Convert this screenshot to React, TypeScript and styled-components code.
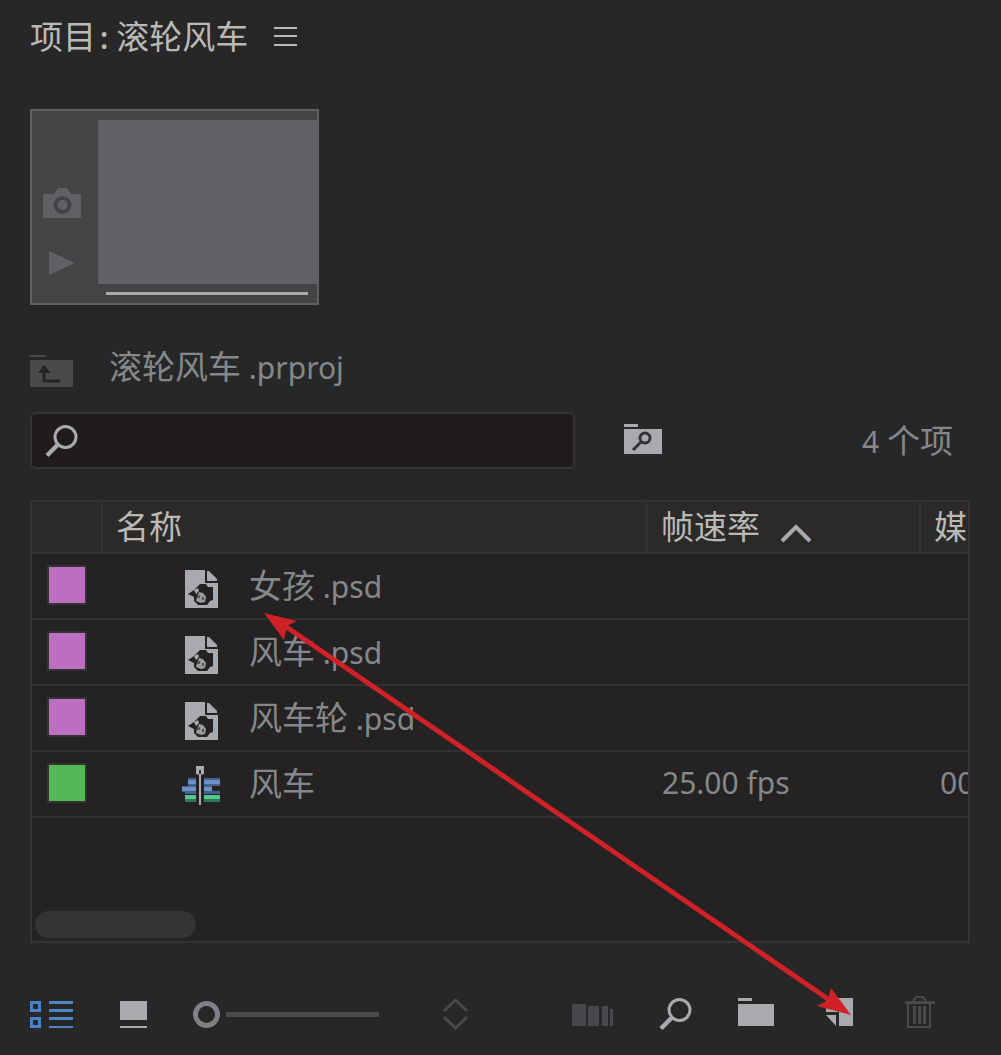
import React from "react";
import styled, { createGlobalStyle } from "styled-components";

const color = {
  page: "#282727",
  panel: "#242222",
  header: "#2b2a29",
  line: "#343233",
  bright: "#b9b9b8",
  text: "#84888a",
  icon: "#a9aaad",
  dim: "#4a4a4d",
  blue: "#5083c5",
};

const latin = `"Noto Sans", "Noto Sans CJK SC", sans-serif`;
const cjk = `"Noto Sans CJK SC", "Noto Sans", sans-serif`;

const GlobalStyle = createGlobalStyle`
  *, *::before, *::after { box-sizing: border-box; }
  body { margin: 0; background: ${color.page}; }
  svg { display: block; flex: none; }
`;

const Panel = styled.main`
  position: relative;
  display: flex;
  flex-direction: column;
  min-height: 100vh;
  padding: 12px 31px 21px 30px;
  overflow: hidden;
  background: ${color.page};
  color: ${color.text};
  font: 400 30px/48px ${latin};
`;

const Han = styled.span`
  font-family: ${cjk};
  font-size: 33px;
  font-weight: 400;
`;

const IconButton = styled.button`
  display: flex;
  flex: none;
  padding: 0;
  border: 0;
  background: none;
  cursor: pointer;
`;

const TitleBar = styled.header`
  display: flex;
  align-items: center;
  gap: 26px;
  height: 48px;
`;

const Title = styled.h1`
  margin: 0;
  color: ${color.bright};
  font: inherit;
  white-space: nowrap;
`;

const Colon = styled.span`
  margin: 0 8px 0 4px;
  font-weight: 600;
`;

const Preview = styled.section`
  display: flex;
  width: 289px;
  height: 196px;
  margin-top: 49px;
  border: 2px solid #5f6165;
  background: #444346;
`;

const PreviewTools = styled.div`
  display: flex;
  flex-direction: column;
  align-items: center;
  gap: 31px;
  width: 66px;
  padding: 76px 6px 0 0;
`;

const PreviewScreen = styled.div`
  flex: 1;
  padding-top: 9px;
`;

const Frame = styled.div`
  height: 164px;
  background: #5f6165;
`;

const Scrubber = styled.div`
  height: 3px;
  margin: 8px 9px 0 8px;
  background: #a9aaac;
`;

const PathRow = styled.nav`
  display: flex;
  align-items: center;
  gap: 36px;
  height: 48px;
  margin-top: 37px;
  white-space: nowrap;
`;

const SearchRow = styled.div`
  display: flex;
  align-items: center;
  height: 57px;
  margin-top: 22px;
`;

const SearchBox = styled.label`
  display: flex;
  align-items: center;
  width: 58%;
  height: 100%;
  margin-right: 49px;
  padding: 0 13px;
  border: 2px solid #353334;
  border-radius: 6px;
  background: #1f1c1b;
`;

const SearchInput = styled.input`
  flex: 1;
  min-width: 0;
  padding: 0 12px;
  border: 0;
  outline: 0;
  background: none;
  color: ${color.bright};
  font: inherit;
`;

const Count = styled.p`
  margin: 0 17px 0 auto;
  white-space: nowrap;
`;

const Bin = styled.section`
  display: flex;
  flex: 1;
  flex-direction: column;
  margin-top: 31px;
  border: 2px solid ${color.line};
  background: ${color.panel};
  overflow: hidden;
`;

const Table = styled.table`
  width: 100%;
  table-layout: fixed;
  border-collapse: separate;
  border-spacing: 0;
`;

const Col = styled.col<{ $w?: number }>`
  width: ${(p) => (p.$w ? `${p.$w}px` : "auto")};
`;

const HeadCell = styled.th`
  height: 52px;
  padding: 0 0 2px 13px;
  border-right: 2px solid ${color.line};
  border-bottom: 2px solid ${color.line};
  background: ${color.header};
  color: ${color.bright};
  font-weight: 400;
  line-height: 44px;
  text-align: left;
  white-space: nowrap;
  overflow: hidden;

  &:last-child { border-right: 0; }
`;

const SortButton = styled.button`
  display: flex;
  align-items: center;
  gap: 20px;
  padding: 0;
  border: 0;
  background: none;
  color: inherit;
  font: inherit;
  cursor: pointer;
`;

const Cell = styled.td<{ $pad?: number }>`
  height: 66px;
  padding: 0 0 2px ${(p) => p.$pad ?? 14}px;
  border-bottom: 2px solid #302e2f;
  white-space: nowrap;
  overflow: hidden;
`;

const LabelCell = styled(Cell)`
  padding-top: 11px;
  vertical-align: top;
`;

const Swatch = styled.div<{ $fill: string }>`
  width: 40px;
  height: 40px;
  border: 2px solid ${color.line};
  background: ${(p) => p.$fill};
`;

const Item = styled.div`
  display: flex;
  align-items: center;
  gap: 27px;
`;

const ScrollThumb = styled.div`
  width: 161px;
  height: 27px;
  margin: auto 0 3px 3px;
  border-radius: 14px;
  background: #353334;
`;

const Toolbar = styled.footer`
  display: flex;
  justify-content: space-between;
  height: 40px;
  margin-top: 51px;
  padding-right: 35px;
`;

const Group = styled.div`
  display: flex;
  align-items: center;
  gap: 46px;
`;

const ZoomSlider = styled.input`
  width: 186px;
  height: 27px;
  margin: 0;
  appearance: none;
  background: none;
  cursor: pointer;

  &::-webkit-slider-runnable-track {
    height: 5px;
    background: linear-gradient(to right, transparent 33px, ${color.dim} 33px);
  }

  &::-webkit-slider-thumb {
    appearance: none;
    width: 27px;
    height: 27px;
    margin-top: -11px;
    border: 5px solid #7f8184;
    border-radius: 50%;
    background: ${color.page};
  }
`;

const Callout = styled.svg`
  position: absolute;
  top: 0;
  left: 0;
  pointer-events: none;
`;

const Magnifier = () => (
  <svg width="33" height="34" viewBox="0 0 33 34" fill="none" stroke={color.icon}>
    <circle cx="20.5" cy="13" r="10.5" strokeWidth="3" />
    <path d="M13 20.5L2 31.5" strokeWidth="4.5" />
  </svg>
);

const PsdIcon = () => (
  <svg width="40" height="46" viewBox="0 -4 40 46">
    <path d="M3 4h20v13h13v25H3z" fill={color.icon} />
    <path d="M25 5h2l8 8v2h-10z" fill={color.icon} />
    <path d="M18 18h6l2 3h5v13l-3 1-3 4h-9l-4-4v-4l-6-3 6-4 3-3z" fill="#242222" />
    <path d="M12 24l4-2 1 3-3 3z" fill={color.icon} />
    <path d="M17 26l4 1 3 4-1 5-4 1-5-2 1-4z" fill="#9a9b9e" />
    <path d="M15 29h3v3h-3zM20 31h2v3h-2z" fill="#55555a" />
  </svg>
);

const SequenceIcon = () => (
  <svg width="40" height="46" viewBox="0 -4 40 46">
    <path d="M6 14h8v8H6zM22 14h16v8H22z" fill="#47618d" />
    <path d="M6 16h8v4H6zM22 16h16v4H22z" fill="#6d92cb" />
    <path d="M0 22h14v8H3v-2H0zM22 22h8v5h8v3H22z" fill="#47618d" />
    <path d="M0 23h14v4H0zM22 23h8v4h-8z" fill="#6d92cb" />
    <path d="M3 31h11v7H3zM22 31h16v7H22z" fill="#2f7a58" />
    <path d="M3 31h11v4H3zM22 31h16v4H22z" fill="#55c890" />
    <path d="M14 2h8v8l-3 1v30h-2V11l-3-1z" fill="#a9aaad" />
    <path d="M17 6h2v4h-2z" fill="#333" />
  </svg>
);

type Row = {
  name: string;
  ext?: string;
  label: string;
  rate?: string;
  start?: string;
};

const rows: Row[] = [
  { name: "女孩", ext: ".psd", label: "#bc6fc0" },
  { name: "风车", ext: ".psd", label: "#bc6fc0" },
  { name: "风车轮", ext: ".psd", label: "#bc6fc0" },
  { name: "风车", label: "#53b957", rate: "25.00 fps", start: "00" },
];

export default function App() {
  return (
    <>
      <GlobalStyle />
      <Panel>
        <TitleBar>
          <Title>
            <Han>项目</Han>
            <Colon>:</Colon>
            <Han>滚轮风车</Han>
          </Title>
          <IconButton aria-label="面板菜单">
            <svg width="23" height="20" viewBox="0 0 23 20" fill={color.bright}>
              <path d="M0 1h23v2H0zM0 9h23v2H0zM0 18h23v2H0z" />
            </svg>
          </IconButton>
        </TitleBar>

        <Preview>
          <PreviewTools>
            <IconButton aria-label="标识帧">
              <svg width="38" height="32" viewBox="0 0 38 32">
                <path d="M0 7h11l4-6h9l4 6h10v24H0z" fill="#5f6165" />
                <circle cx="19.5" cy="18" r="7" fill="none" stroke="#444346" strokeWidth="4" />
              </svg>
            </IconButton>
            <IconButton aria-label="播放">
              <svg width="26" height="26" viewBox="0 0 26 26">
                <path d="M0 1l26 12L0 25z" fill="#5f6165" />
              </svg>
            </IconButton>
          </PreviewTools>
          <PreviewScreen>
            <Frame />
            <Scrubber />
          </PreviewScreen>
        </Preview>

        <PathRow>
          <IconButton aria-label="上一级">
            <svg width="43" height="48" viewBox="0 0 43 48">
              <path d="M0 13h16v2H0zM0 18h43v27H0z" fill={color.dim} />
              <path d="M14 24v15h16" fill="none" stroke="#252424" strokeWidth="3" />
              <path d="M8 31l6-8 7 8z" fill="#252424" />
            </svg>
          </IconButton>
          <span>
            <Han>滚轮风车</Han> .prproj
          </span>
        </PathRow>

        <SearchRow>
          <SearchBox>
            <Magnifier />
            <SearchInput type="text" aria-label="搜索" />
          </SearchBox>
          <IconButton aria-label="从查询创建新的搜索素材箱">
            <svg width="38" height="34" viewBox="0 0 38 34">
              <path d="M0 0h14v3H0zM0 5h38v25H0z" fill={color.icon} />
              <circle cx="21" cy="14" r="5" fill="none" stroke="#333236" strokeWidth="3" />
              <path d="M17 18l-8 8" stroke="#333236" strokeWidth="3" />
            </svg>
          </IconButton>
          <Count>
            4 <Han>个项</Han>
          </Count>
        </SearchRow>

        <Bin>
          <Table>
            <colgroup>
              <Col $w={71} />
              <Col />
              <Col $w={273} />
              <Col $w={47} />
            </colgroup>
            <thead>
              <tr>
                <HeadCell aria-label="标签" />
                <HeadCell>
                  <Han>名称</Han>
                </HeadCell>
                <HeadCell>
                  <SortButton>
                    <span>
                      <Han>帧速率</Han>
                    </span>
                    <svg width="32" height="34" viewBox="0 0 32 34" fill="none">
                      <path d="M2 32l14-14 14 14" stroke={color.icon} strokeWidth="4" />
                    </svg>
                  </SortButton>
                </HeadCell>
                <HeadCell>
                  <Han>媒</Han>
                </HeadCell>
              </tr>
            </thead>
            <tbody>
              {rows.map((row, i) => (
                <tr key={i}>
                  <LabelCell $pad={15}>
                    <Swatch $fill={row.label} />
                  </LabelCell>
                  <Cell $pad={79}>
                    <Item>
                      {row.ext ? <PsdIcon /> : <SequenceIcon />}
                      <span>
                        <Han>{row.name}</Han>
                        {row.ext && ` ${row.ext}`}
                      </span>
                    </Item>
                  </Cell>
                  <Cell>{row.rate}</Cell>
                  <Cell $pad={19}>{row.start}</Cell>
                </tr>
              ))}
            </tbody>
          </Table>
          <ScrollThumb />
        </Bin>

        <Toolbar>
          <Group>
            <IconButton aria-label="列表视图">
              <svg width="44" height="40" viewBox="0 0 44 40">
                <path d="M1.500 8.500h8v8h-8zM1.500 24.500h8v8h-8z" fill="none" stroke={color.blue} strokeWidth="3" />
                <path d="M19 7h24v3H19zM19 15h24v3H19zM19 23h24v3H19zM19 32h24v2H19z" fill={color.blue} />
              </svg>
            </IconButton>
            <IconButton aria-label="图标视图">
              <svg width="27" height="40" viewBox="0 0 27 40">
                <path d="M0 7h27v19H0zM0 32h27v2H0z" fill={color.icon} />
              </svg>
            </IconButton>
            <ZoomSlider type="range" min={0} max={100} defaultValue={0} aria-label="缩放" />
            <IconButton aria-label="排序图标">
              <svg width="44" height="40" viewBox="0 0 44 40" fill="none">
                <path d="M19 17L30.500 6L42 17M19 23l11.500 11L42 23" stroke={color.dim} strokeWidth="3" />
              </svg>
            </IconButton>
          </Group>
          <Group>
            <IconButton aria-label="自动匹配序列">
              <svg width="41" height="40" viewBox="0 0 41 40">
                <path d="M0 10h14v22H0zM16 12h11v20H16zM30 12h6v20h-6zM38 15h3v17h-3z" fill="#47484c" />
              </svg>
            </IconButton>
            <IconButton aria-label="查找">
              <Magnifier />
            </IconButton>
            <IconButton aria-label="新建素材箱">
              <svg width="36" height="40" viewBox="0 0 36 40">
                <path d="M0 4h14v3H0zM0 10h36v22H0z" fill={color.icon} />
              </svg>
            </IconButton>
            <IconButton aria-label="新建项">
              <svg width="33" height="40" viewBox="0 0 33 40">
                <path d="M6 4h27v28H19V18H6z" fill={color.icon} />
                <path d="M6 21h10v11z" fill={color.icon} />
              </svg>
            </IconButton>
            <IconButton aria-label="清除">
              <svg width="36" height="40" viewBox="0 0 36 40" fill="none" stroke={color.dim}>
                <path d="M6 8.500h30" strokeWidth="3" />
                <path d="M9 9v24h22V9" strokeWidth="2" />
                <path d="M14.500 8V6l3-3h6l3 3v2" strokeWidth="2" />
                <path d="M15.500 12v18M20.500 12v18M25.500 12v18" strokeWidth="3" />
              </svg>
            </IconButton>
          </Group>
        </Toolbar>

        <Callout width="1001" height="1055" viewBox="0 0 1001 1055" fill="#cf2128" aria-hidden="true">
          <path d="M285 626L831 1001" stroke="#cf2128" strokeWidth="5" />
          <path d="M264 613l33 8-10 5-3 14z" />
          <path d="M851 1015l-20-27-3 12-11 6z" />
        </Callout>
      </Panel>
    </>
  );
}
